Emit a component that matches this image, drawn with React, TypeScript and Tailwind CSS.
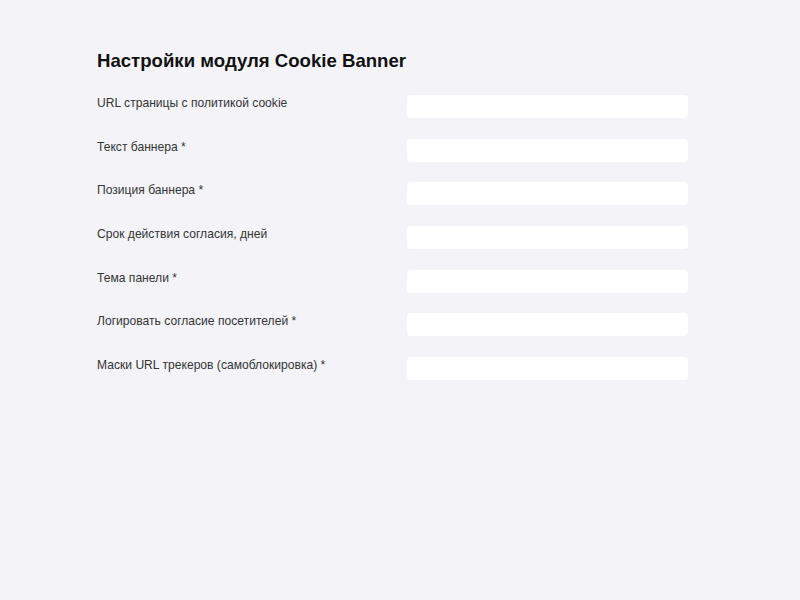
import React from "react";

const fields = [
  "URL страницы с политикой cookie",
  "Текст баннера *",
  "Позиция баннера *",
  "Срок действия согласия, дней",
  "Тема панели *",
  "Логировать согласие посетителей *",
  "Маски URL трекеров (самоблокировка) *",
];

export default function App() {
  return (
    <div
      className="min-h-screen bg-[#f4f4f8] pl-[97px] pt-[49px] text-[#333]"
      style={{ fontFamily: '"Liberation Sans", Arial, sans-serif' }}
    >
      <h1 className="text-[18.6px] font-bold leading-[24px] text-[#111]">
        Настройки модуля Cookie Banner
      </h1>

      <div className="mt-[22px] grid grid-cols-[310px_281px] gap-y-[20.67px]">
        {fields.map((label) => (
          <React.Fragment key={label}>
            <label className="text-[12.1px] leading-[16px]">{label}</label>
            <input
              type="text"
              className="h-[23px] rounded-[4px] bg-white outline-none"
            />
          </React.Fragment>
        ))}
      </div>
    </div>
  );
}
